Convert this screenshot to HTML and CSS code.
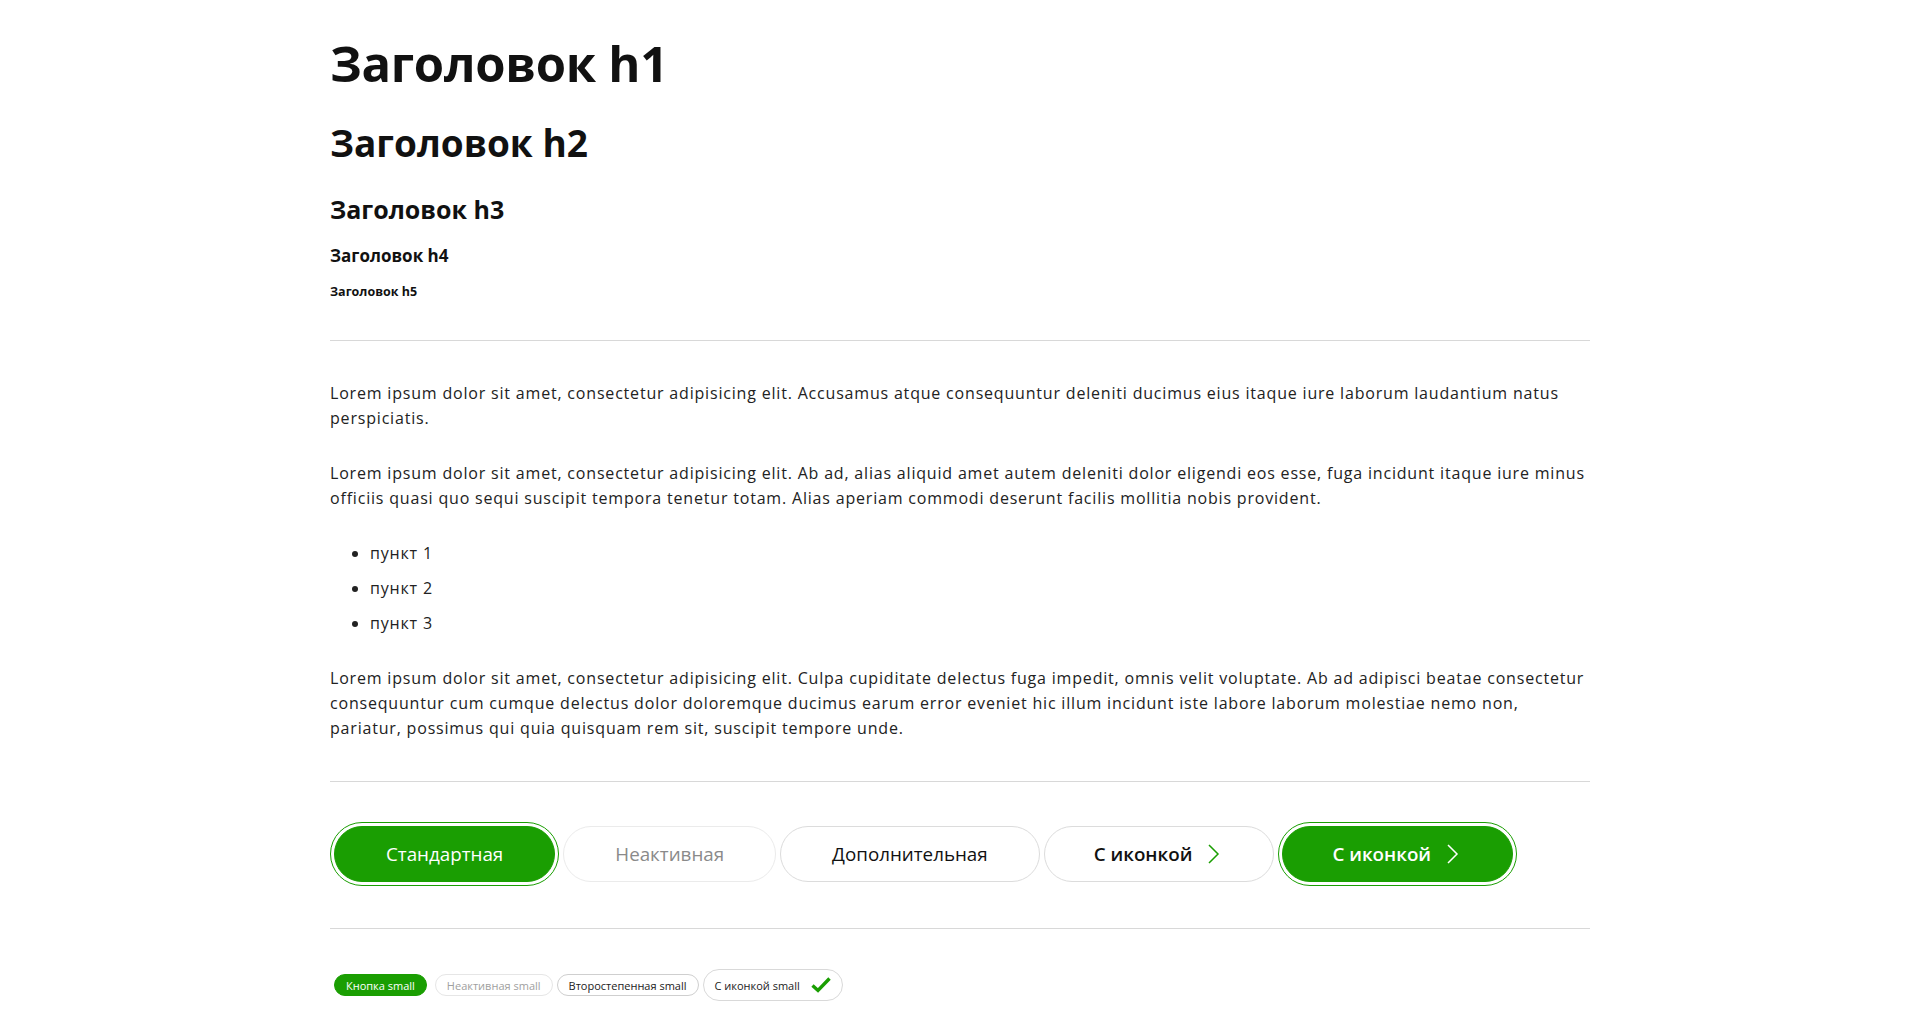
FILE: index.html
```html
<!DOCTYPE html>
<html lang="ru">
<head>
<meta charset="utf-8">
<title>Типографика</title>
<link rel="stylesheet" href="styles.css">
</head>
<body>
<main class="page">
  <h1 class="h1">Заголовок h1</h1>
  <h2 class="h2">Заголовок h2</h2>
  <h3 class="h3">Заголовок h3</h3>
  <h4 class="h4">Заголовок h4</h4>
  <h5 class="h5">Заголовок h5</h5>

  <hr class="divider">

  <p class="text">Lorem ipsum dolor sit amet, consectetur adipisicing elit. Accusamus atque consequuntur deleniti ducimus eius itaque iure laborum laudantium natus perspiciatis.</p>
  <p class="text">Lorem ipsum dolor sit amet, consectetur adipisicing elit. Ab ad, alias aliquid amet autem deleniti dolor eligendi eos esse, fuga incidunt itaque iure minus officiis quasi quo sequi suscipit tempora tenetur totam. Alias aperiam commodi deserunt facilis mollitia nobis provident.</p>
  <ul class="list">
    <li>пункт 1</li>
    <li>пункт 2</li>
    <li>пункт 3</li>
  </ul>
  <p class="text">Lorem ipsum dolor sit amet, consectetur adipisicing elit. Culpa cupiditate delectus fuga impedit, omnis velit voluptate. Ab ad adipisci beatae consectetur consequuntur cum cumque delectus dolor doloremque ducimus earum error eveniet hic illum incidunt iste labore laborum molestiae nemo non, pariatur, possimus qui quia quisquam rem sit, suscipit tempore unde.</p>

  <hr class="divider">

  <div class="btn-row">
    <button class="btn btn--primary">Стандартная</button>
    <button class="btn btn--disabled">Неактивная</button>
    <button class="btn btn--secondary">Дополнительная</button>
    <button class="btn btn--secondary btn--icon">С иконкой
      <svg class="btn__chevron" viewBox="0 0 18 20" width="18" height="20"><path d="M1 1 L10 10 L1 19" fill="none" stroke="#1a9e02" stroke-width="1.5"/></svg>
    </button>
    <button class="btn btn--primary btn--icon">С иконкой
      <svg class="btn__chevron" viewBox="0 0 18 20" width="18" height="20"><path d="M1 1 L10 10 L1 19" fill="none" stroke="#ffffff" stroke-width="1.5"/></svg>
    </button>
  </div>

  <hr class="divider">

  <div class="btn-row btn-row--small">
    <button class="sbtn sbtn--primary">Кнопка small</button>
    <button class="sbtn sbtn--disabled">Неактивная small</button>
    <button class="sbtn sbtn--secondary">Второстепенная small</button>
    <button class="sbtn sbtn--icon">С иконкой small
      <svg class="sbtn__check" viewBox="0 0 20 16" width="20" height="16"><path d="M1.5 8.5 L7 13.5 L18.5 1.5" fill="none" stroke="#1a9e02" stroke-width="3.4"/></svg>
    </button>
  </div>
</main>
</body>
</html>
```
FILE: styles.css
```css
* { box-sizing: border-box; }

body {
  margin: 0;
  background: #ffffff;
  color: #222222;
  font-family: "Open Sans", "DejaVu Sans", sans-serif;
}

.page {
  width: 1260px;
  margin: 0 auto;
  padding: 33px 0 40px;
}

.h1, .h2, .h3, .h4, .h5 {
  font-family: "Open Sans", "DejaVu Sans", sans-serif;
  font-weight: 700;
  color: #111111;
  margin: 0;
}

.h1 { font-size: 49px; line-height: 60px; letter-spacing: -0.3px; }
.h2 { font-size: 37px; line-height: 44px; margin-top: 28px; }
.h3 { font-size: 25px; line-height: 30px; margin-top: 29px; }
.h4 { font-size: 17px; line-height: 22px; margin-top: 21px; }
.h5 { font-size: 12.5px; line-height: 16px; margin-top: 17px; }

.divider {
  border: 0;
  border-top: 1px solid #d8d8d8;
  height: 0;
  margin: 40px 0;
}

.text {
  font-size: 16px;
  line-height: 25px;
  letter-spacing: 0.81px;
  margin: 0 0 30px;
  color: #222222;
}

.list {
  margin: 0 0 30px;
  padding-left: 40px;
  font-size: 16px;
  line-height: 25px;
  letter-spacing: 0.81px;
  color: #222222;
}
.list li + li { margin-top: 10px; }

/* ----- buttons ----- */
.btn-row {
  display: flex;
  align-items: center;
  gap: 4px;
  padding: 4px 0 6px;
}
.btn-row--small { padding: 0; }

.btn {
  height: 56px;
  padding: 0 51px;
  border: 1px solid #dcdcdc;
  border-radius: 28px;
  background: #ffffff;
  color: #111111;
  font-family: "Open Sans", "DejaVu Sans", sans-serif;
  font-size: 18.8px;
  font-weight: 500;
  display: inline-flex;
  align-items: center;
  justify-content: center;
  white-space: nowrap;
  cursor: pointer;
}

.btn--primary {
  background: #1a9e02;
  border-color: #1a9e02;
  color: #ffffff;
  margin: 0 4px;
  outline: 1.5px solid #1a9e02;
  outline-offset: 3.5px;
}

.btn--disabled {
  border-color: #ebebeb;
  color: #8a8a8a;
}

.btn--secondary {
  border-color: #dcdcdc;
  color: #111111;
}

.btn--icon {
  font-weight: 600;
  padding: 0 47px 0 49px;
}

.btn__chevron {
  margin-left: 16px;
  display: block;
}

.sbtn {
  height: 22px;
  padding: 0 11px;
  border: 1px solid #d9d9d9;
  border-radius: 16px;
  background: #ffffff;
  color: #222222;
  font-family: "Open Sans", "DejaVu Sans", sans-serif;
  font-size: 11px;
  font-weight: 400;
  display: inline-flex;
  align-items: center;
  white-space: nowrap;
  cursor: pointer;
}

.sbtn--primary {
  background: #1a9e02;
  border-color: #1a9e02;
  color: #ffffff;
  margin: 0 4px;
}

.sbtn--disabled {
  border-color: #e6e6e6;
  color: #a0a0a0;
}

.sbtn--secondary {
  border-color: #cfcfcf;
  color: #222222;
}

.sbtn--icon {
  height: 32px;
  border-color: #d9d9d9;
}

.sbtn__check {
  margin-left: 11px;
  display: block;
}
```
